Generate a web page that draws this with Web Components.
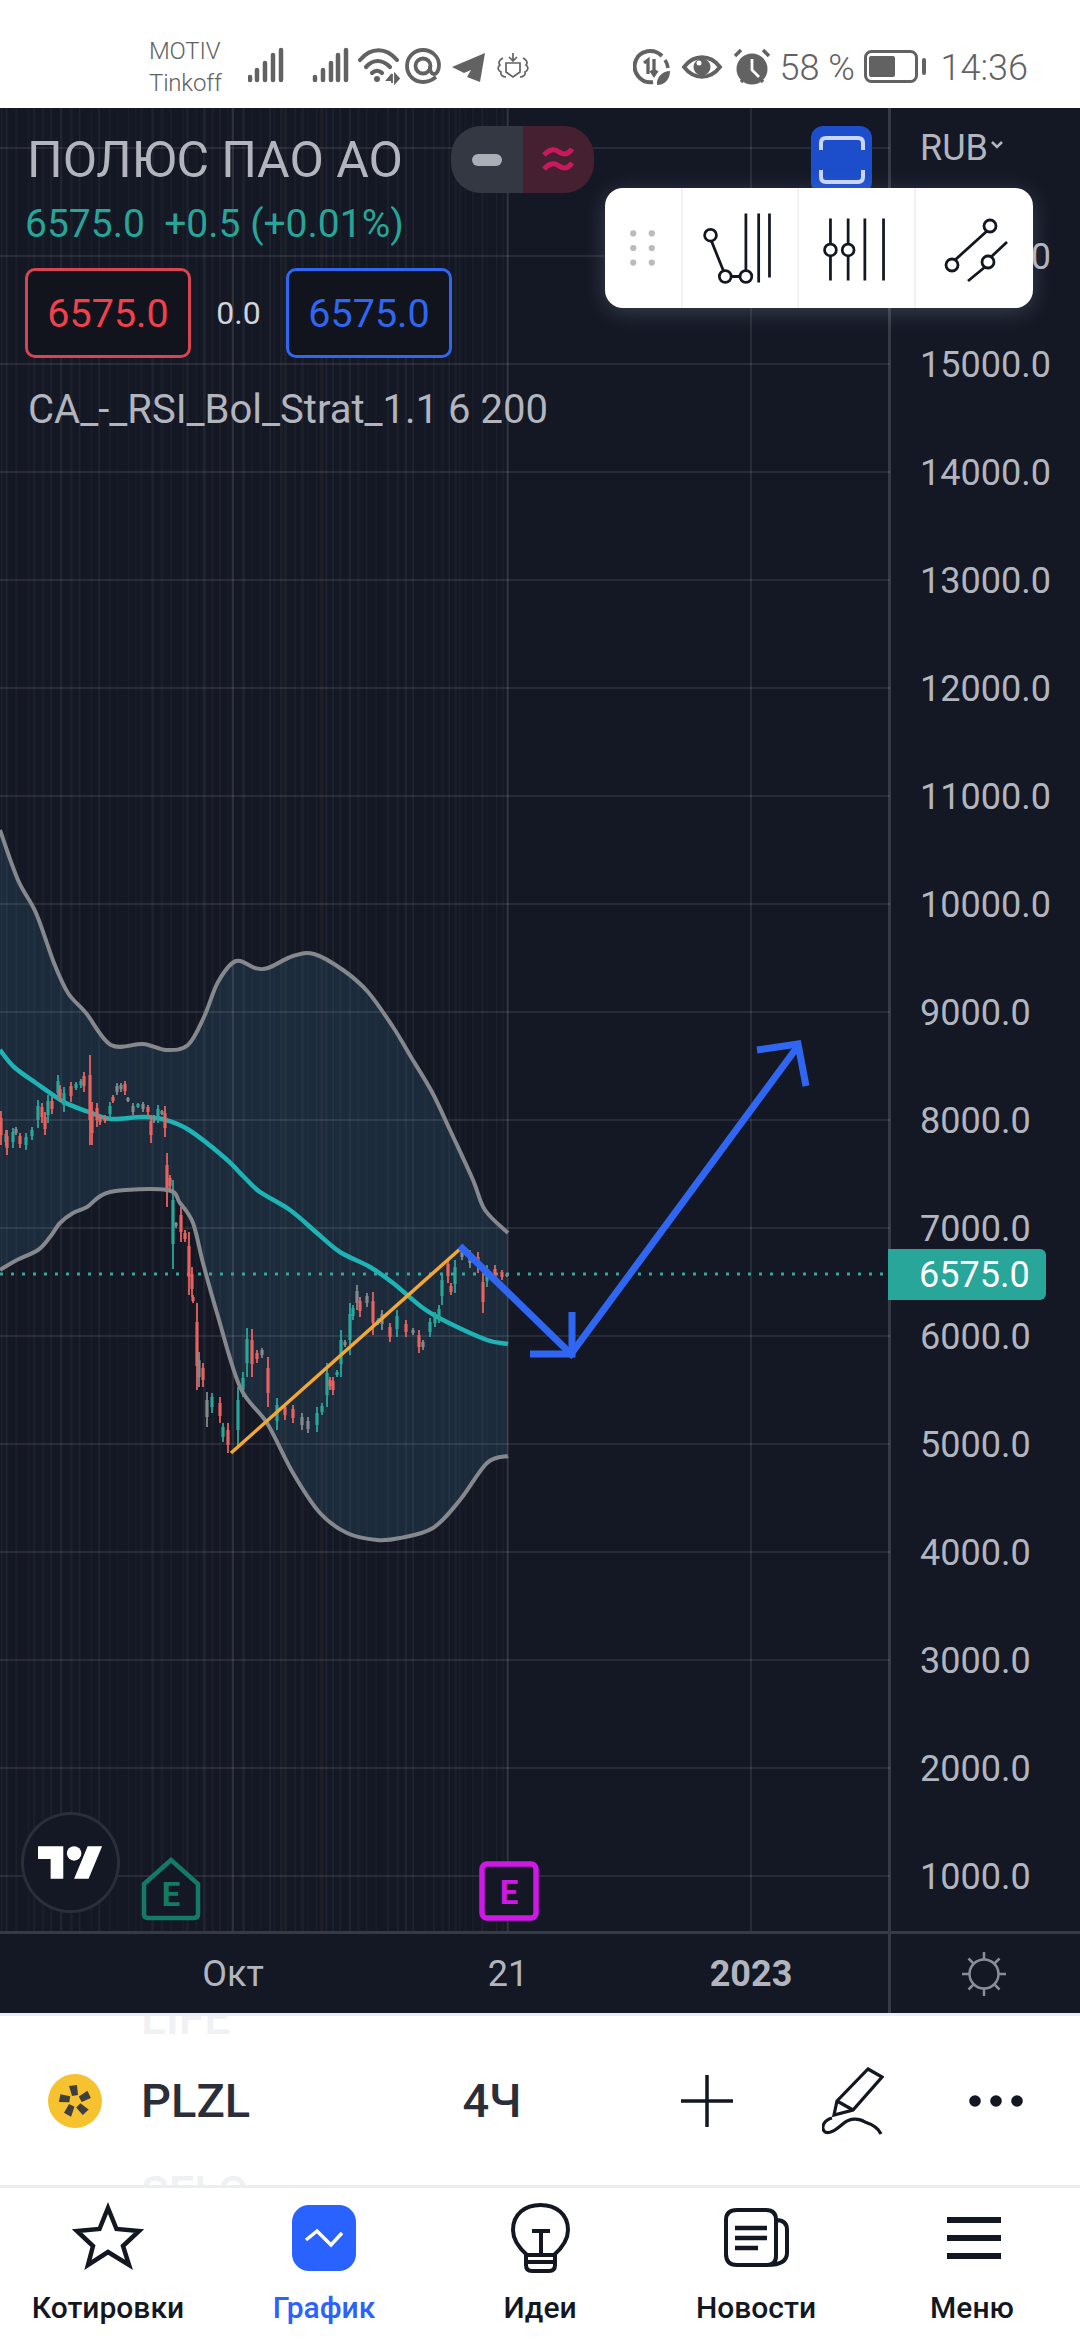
<!DOCTYPE html>
<html lang="ru"><head><meta charset="utf-8"><title>PLZL</title>
<style>
html,body{margin:0;padding:0;background:#fff;}
body{width:1080px;height:2340px;overflow:hidden;font-family:Roboto,"Noto Sans",sans-serif;display:flex;flex-direction:column;}
</style></head><body>
<ts-status></ts-status>
<ts-chart></ts-chart>
<ts-symbol></ts-symbol>
<ts-tabbar>
  <ts-tab label="Котировки"><svg viewBox="68 2198 80 80" width="80" height="80" fill="none" stroke="#131722" stroke-width="4.5" stroke-linejoin="miter"><path d="M108 2208L116.500 2229L139 2231L123 2246L129 2265L108 2252L88 2265L93 2246L77 2231L99.500 2229Z"/></svg></ts-tab>
  <ts-tab label="График" active><svg viewBox="284 2198 80 80" width="80" height="80"><rect x="292" y="2205" width="64" height="66" rx="17" fill="#2962ff"/><path d="M306 2240L317 2231L331 2245L342 2233" fill="none" stroke="#fff" stroke-width="3.500"/></svg></ts-tab>
  <ts-tab label="Идеи"><svg viewBox="500 2198 80 80" width="80" height="80" fill="none" stroke="#131722" stroke-width="4"><path d="M527 2255C518 2247 513 2238 513 2230C513 2214 525 2205 540.500 2205C556 2205 568 2214 568 2230C568 2238 563 2247 554 2255Z"/><path d="M532 2231H550M541 2231V2255M526 2255V2265Q526 2271 532 2271H549Q555 2271 555 2265V2255M526 2262H555"/></svg></ts-tab>
  <ts-tab label="Новости"><svg viewBox="716 2198 80 80" width="80" height="80" fill="none" stroke="#131722" stroke-width="4"><path d="M776 2220V2256Q776 2265 767 2265H737Q726 2265 726 2254V2220Q726 2210 737 2210H766Q776 2210 776 2220Q787 2220 787 2230V2253Q787 2265 767 2265"/><path d="M735 2228H767M735 2238H767M735 2248H758" stroke-width="4.500"/></svg></ts-tab>
  <ts-tab label="Меню"><svg viewBox="932 2198 80 80" width="80" height="80" fill="#131722"><rect x="947" y="2217" width="54" height="6"/><rect x="947" y="2235" width="54" height="6"/><rect x="947" y="2253" width="54" height="6"/></svg></ts-tab>
</ts-tabbar>
<script>
function catmull(p){
  let d='M'+p[0][0]+' '+p[0][1];
  for(let i=0;i<p.length-1;i++){
    const a=p[Math.max(i-1,0)],b=p[i],c=p[i+1],e=p[Math.min(i+2,p.length-1)];
    const f=n=>n.toFixed(1);
    d+='C'+f(b[0]+(c[0]-a[0])/6)+' '+f(b[1]+(c[1]-a[1])/6)+' '+f(c[0]-(e[0]-b[0])/6)+' '+f(c[1]-(e[1]-b[1])/6)+' '+c[0]+' '+c[1];
  }
  return d;
}
const UPPER=[[0,830],[18,880],[36,913],[54,963],[68,993],[86,1013],[111,1045],[143,1044],[166,1050],[188,1045],[204,1017],[218,982],[236,961],[255,968],[268,968],[293,956],[314,954],[343,970],[368,992],[393,1027],[411,1057],[432,1092],[450,1130],[473,1180],[485,1210],[508,1233]];
const LOWER=[[0,1270],[17,1260],[38,1250],[50,1237],[60,1223],[73,1213],[87,1207],[110,1192],[167,1190],[180,1203],[193,1223],[203,1263],[217,1313],[240,1387],[267,1423],[293,1473],[320,1513],[347,1533],[377,1540],[400,1538],[433,1528],[460,1500],[487,1463],[508,1456]];
const MA=[[0,1050],[14,1067],[36,1083],[64,1102],[89,1112],[111,1119],[143,1117],[166,1120],[189,1130],[225,1158],[245,1178],[260,1192],[290,1210],[317,1233],[340,1252],[370,1267],[393,1283],[423,1308],[447,1322],[487,1340],[508,1344]];
const A=[[1,'r',1111,1145],[6,'g',1130,1146],[7,'r',1130,1155],[13,'g',1128,1148],[16,'n',1127,1135],[20,'r',1133,1148],[26,'g',1133,1150],[32,'g',1127,1140],[38,'g',1100,1128],[42,'r',1103,1123],[45,'r',1112,1135],[48,'g',1095,1123],[52,'r',1097,1114],[58,'g',1075,1100],[60,'r',1085,1102],[64,'g',1087,1112],[71,'r',1082,1102],[76,'g',1082,1090],[81,'g',1079,1088],[84,'r',1072,1092],[90,'r',1055,1145],[92,'r',1102,1145],[97,'r',1103,1127],[100,'r',1115,1125],[105,'r',1115,1123],[110,'g',1102,1118],[113,'r',1095,1103],[117,'n',1083,1095],[121,'n',1083,1092],[125,'r',1081,1095],[128,'n',1097,1102],[133,'n',1103,1115],[138,'g',1103,1108],[143,'n',1102,1112],[148,'r',1105,1115],[151,'r',1115,1143],[154,'n',1115,1123],[158,'g',1105,1123],[162,'n',1110,1115],[165,'r',1106,1137],[167,'r',1153,1207],[170,'r',1175,1190],[173,'g',1180,1269],[176,'n',1222,1228],[181,'r',1207,1242],[185,'r',1230,1242],[189,'r',1232,1295],[192,'r',1267,1297],[193,'r',1295,1303],[197,'r',1303,1390],[199,'n',1352,1387],[203,'r',1363,1387],[207,'n',1392,1427],[212,'g',1393,1413],[220,'r',1397,1423],[223,'g',1423,1442],[228,'r',1423,1453],[238,'g',1387,1447],[243,'g',1372,1397],[247,'g',1328,1377],[252,'r',1329,1377],[257,'r',1350,1363],[262,'n',1348,1358],[268,'r',1357,1407],[277,'g',1398,1430],[285,'r',1403,1420],[293,'r',1405,1423],[302,'n',1413,1430],[308,'n',1417,1433],[317,'g',1407,1432],[322,'g',1403,1415],[327,'g',1363,1407],[330,'r',1377,1390],[333,'r',1377,1395],[337,'g',1370,1377],[341,'g',1330,1377],[345,'n',1340,1347],[350,'g',1303,1355],[353,'g',1305,1320],[357,'n',1285,1310],[360,'r',1297,1317],[367,'n',1293,1307],[373,'r',1292,1335],[378,'g',1318,1325],[382,'n',1310,1330],[390,'r',1323,1342],[397,'g',1310,1337],[406,'r',1320,1337],[413,'n',1328,1335],[419,'r',1330,1353],[423,'n',1340,1350],[430,'g',1318,1337],[435,'g',1312,1327],[439,'g',1305,1323],[442,'g',1273,1305],[448,'r',1258,1283],[451,'r',1283,1295],[455,'g',1260,1293],[462,'n',1248,1260],[470,'n',1250,1268],[478,'r',1252,1273],[483,'r',1273,1313],[487,'g',1265,1287],[495,'r',1265,1283],[502,'r',1270,1280],[507,'n',1273,1277]];
const COL={r:'#e8625f',g:'#2aa79b',n:'#85888c'};
function stripes(){
  let s='',x=1,seed=17;
  const rnd=()=>{seed=(seed*1103515245+12345)&0x7fffffff;return seed/0x7fffffff;};
  while(x<508){
    const warm=rnd()<.45;
    const o=(.025+rnd()*.035).toFixed(3);
    const w=(1+rnd()*2).toFixed(1);
    s+='<rect x="'+x.toFixed(1)+'" y="108" width="'+w+'" height="1823" fill="'+(warm?'#c8a080':'#ffffff')+'" opacity="'+o+'"/>';
    x+=4+rnd()*8;
  }
  return s;
}
function plotSvg(){
  const upperRev=LOWER.slice().reverse();
  const bandD=catmull(UPPER)+'L'+upperRev.map(p=>p.join(' ')).join('L')+'Z';
  let grid='';
  for(let y=148;y<=1877;y+=108.03){grid+='<rect x="0" y="'+(Math.round(y)-1)+'" width="890" height="2" fill="#fff" opacity=".085"/>';}
  [233,508,751].forEach(x=>{grid+='<rect x="'+(x-1)+'" y="108" width="2" height="1823" fill="#fff" opacity=".085"/>';});
  let c='';
  A.forEach(a=>{
    const [x,k,t,b]=a;
    c+='<path d="M'+x+' '+t+'V'+b+'" stroke="'+COL[k]+'" stroke-width="1.800"/>';
    const h=(b-t)*.5,m=t+(b-t)*.22;
    c+='<path d="M'+x+' '+m.toFixed(0)+'V'+(m+h).toFixed(0)+'" stroke="'+COL[k]+'" stroke-width="3.200"/>';
  });
  return '<svg viewBox="0 108 890 1823" width="890" height="1823" xmlns="http://www.w3.org/2000/svg" fill="none">'+
  '<path d="'+bandD+'" fill="#1b2b3b" stroke="none"/>'+stripes()+grid+
  '<path d="'+catmull(MA)+'" stroke="#1eb3b4" stroke-width="4.500"/>'+
  '<path d="M0 1274H888" stroke="#34a798" stroke-width="3" stroke-dasharray="3 8"/>'+c+
  '<path d="'+catmull(UPPER)+'" stroke="#85888d" stroke-width="4"/>'+
  '<path d="'+catmull(LOWER)+'" stroke="#85888d" stroke-width="4"/>'+
  '<path d="M231 1453L460 1249" stroke="#f3a832" stroke-width="3.500"/>'+
  '<path d="M460 1246L571 1354L798 1046" stroke="#2f66f2" stroke-width="7" stroke-linejoin="miter"/>'+
  '<path d="M572 1312V1354H530M757 1050L798 1044L806 1086" stroke="#2f66f2" stroke-width="7"/>'+
  '</svg>';
}
const def=(name,html,extra)=>{
  customElements.define(name,class extends HTMLElement{
    constructor(){super();this.attachShadow({mode:'open'}).innerHTML=typeof html==='function'?html(this):html;}
    connectedCallback(){if(extra)extra(this);}
  });
};
def('ts-status',`<style>
:host{display:flex;align-items:center;height:108px;box-sizing:border-box;padding:22px 52px 0 149px;background:#fff;color:#626262;font-family:Roboto,sans-serif;font-weight:300;flex:none}
.c{display:flex;flex-direction:column;width:99px;font-size:24px;line-height:32px;margin-top:4px;letter-spacing:-.2px}
.t{font-size:36px;line-height:40px;margin-top:6px}
.s{flex:1}
svg{display:block;flex:none}
</style>
<div class="c"><span>MOTIV</span><span>Tinkoff</span></div>
<svg width="284" height="50" viewBox="248 40 284 50" fill="none" stroke="#626262">
<g stroke-width="4.500" stroke-linecap="round"><path d="M250 80V77M257 80V70M265 80V63M273 80V55M281 80V50M315 80V77M323 80V70M331 80V63M338 80V55M346 80V50"/></g>
<g stroke-width="4.200" stroke-linecap="round"><path d="M360 60C371 47 386 47 397 60M366 67C373 59 382 59 390 67M372 73C375 70 379 70 382 73"/></g>
<circle cx="377" cy="79" r="3" fill="#626262" stroke="none"/>
<path d="M392 74L387 80H392M392 74V83M395 74L399 78.500L395 83Z" stroke-width="1.800" fill="#626262"/>
<path d="M436 77C431 81 426 82 423 82C414 82 407 75 407 66C407 57 414 50 423 50C432 50 439 57 439 65C439 70 437 74 434 74C431 74 430 71 430 66" stroke-width="3.800"/><circle cx="423" cy="66" r="7.500" stroke-width="3.800"/>
<path d="M485 53L452 67L464 73L471 70L467 77L480 82Z" fill="#626262" stroke="none"/>
<g stroke-width="1.700"><path d="M513 53V60M509 57L513 61L517 57M506 63H520V72L513 77L506 72ZM503 58C499 60 498 63 500 65C497 67 498 71 501 72C500 75 503 77 506 77M523 58C527 60 528 63 526 65C529 67 528 71 525 72C526 75 523 77 520 77"/></g>
</svg><span class="s"></span>
<svg width="138" height="50" viewBox="633 40 138 50" fill="none" stroke="#626262">
<path d="M662 56C654 48 640 50 636 60C631 72 641 84 653 82" stroke-width="4"/><path d="M665 60A17 17 0 0 1 668 68" stroke-width="3.500"/>
<path d="M644 63L648 60V74M654 59V74M651 70.500L654 75L657 70.500" stroke-width="3.300"/>
<path d="M657 85C656 77 663 71 670 71C670 79 665 85 657 85Z" fill="#626262" stroke="none"/>
<path d="M684 67C694 54 710 54 720 67C710 80 694 80 684 67Z" stroke-width="3.800"/><circle cx="702" cy="67" r="8.500" fill="#626262" stroke="none"/><circle cx="699" cy="63" r="2.500" fill="#fff" stroke="none"/>
<circle cx="752" cy="69" r="15.500" fill="#626262" stroke="none"/><path d="M752 59V70L759 77" stroke="#fff" stroke-width="2.800"/>
<path d="M735 56L741 50M769 56L763 50M741 82L744 79M763 82L760 79" stroke-width="3.500"/>
</svg>
<span class="t" style="margin-left:9px;width:84px;white-space:pre">58 %</span>
<svg width="63" height="50" viewBox="864 40 63 50" fill="none"><rect x="865.500" y="51.500" width="51" height="30" rx="6" stroke="#626262" stroke-width="3"/><rect x="869" y="56" width="26" height="21" rx="2" fill="#626262"/><rect x="922" y="58" width="4" height="17" rx="2" fill="#626262"/></svg>
<span class="t" style="margin-left:14px">14:36</span>`);
def('ts-price-scale',`<style>
:host{display:flex;flex-direction:column;padding-left:29px;color:#b2b5be;font-size:36px;font-family:Roboto,sans-serif;height:100%;box-sizing:border-box}
.r{display:flex;align-items:center;height:80px;font-size:36px;margin-bottom:15px;gap:2px}
.p{height:108px;display:flex;align-items:center;flex:none}
svg{display:block}
</style>
<div class="r">RUB<svg width="14" height="10" viewBox="0 0 14 10" fill="none" stroke="#b2b5be" stroke-width="2.500" style="margin-bottom:6px"><path d="M2 2L7 7L12 2"/></svg></div>
`+Array.from({length:16},(_,i)=>'<div class="p">'+(16-i)+'000.0</div>').join(''));
def('ts-time-axis',`<style>
:host{display:grid;grid-template-columns:466px 84px 62px 278px;align-items:center;height:100%;color:#b2b5be;font-size:36px;text-align:center;font-family:Roboto,sans-serif;box-sizing:border-box}
b{grid-column:4}
</style><span>Окт</span><span>21</span><b>2023</b>`);
def('ts-legend',`<style>
:host{display:flex;flex-direction:column;position:absolute;left:0;top:0;padding:18px 0 0 25px;font-family:Roboto,sans-serif;color:#b2b5be;width:600px;box-sizing:border-box}
.title{display:flex;align-items:center;height:67px}
.n{font-size:50px;margin-left:2px;width:424px;white-space:nowrap}
.pill{display:flex;width:143px;height:67px;border-radius:30px;overflow:hidden}
.pill div{flex:1;display:flex;align-items:center;justify-content:center}
.a{background:#343842}.b{background:#452030}
.q{color:#27a598;font-size:39px;line-height:44px;margin-top:9px;white-space:pre}
.boxes{display:flex;align-items:center;margin-top:22px;font-size:39.500px}
.box{width:166px;height:90px;box-sizing:border-box;border:3px solid;border-radius:10px;background:#12141d;display:flex;align-items:center;justify-content:center}
.red{color:#f0414d;border-color:#d64551}.blue{color:#2f66f2;border-color:#2f66f2}
.m{width:95px;text-align:center;font-size:32px;color:#d1d4dc}
.ca{font-size:40px;line-height:44px;margin:30px 0 0 3px;white-space:nowrap}
</style>
<div class="title"><span class="n">ПОЛЮС ПАО АО</span><div class="pill"><div class="a"><svg width="30" height="12"><rect width="30" height="12" rx="6" fill="#abaeb6"/></svg></div><div class="b"><svg width="32" height="28" viewBox="0 0 32 28" fill="none" stroke="#c9195c" stroke-width="5"><path d="M2 9C8 2 14 3 17 6C21 9 26 9 30 3M2 23C8 16 14 17 17 20C21 23 26 23 30 17"/></svg></div></div></div>
<div class="q">6575.0  +0.5 (+0.01%)</div>
<div class="boxes"><div class="box red">6575.0</div><div class="m">0.0</div><div class="box blue">6575.0</div></div>
<div class="ca">CA_-_RSI_Bol_Strat_1.1 6 200</div>`);
def('ts-toolbar',`<style>
:host{display:flex;position:absolute;left:605px;top:80px;width:428px;height:120px;background:#fff;border-radius:18px;box-shadow:0 4px 22px rgba(190,200,235,.22);overflow:hidden}
.c{border-right:2px solid #eff2f8;display:flex;align-items:center;justify-content:center;box-sizing:border-box;height:100%}
.c:last-child{border:0}
svg{display:block}
</style>
<div class="c" style="width:78px"><svg width="78" height="120" viewBox="605 188 78 120" fill="#b9bbc1"><circle cx="634" cy="233" r="3.200"/><circle cx="653" cy="233" r="3.200"/><circle cx="634" cy="248" r="3.200"/><circle cx="653" cy="248" r="3.200"/><circle cx="634" cy="263" r="3.200"/><circle cx="653" cy="263" r="3.200"/></svg></div>
<div class="c" style="width:116px"><svg width="116" height="120" viewBox="683 188 116 120" fill="none" stroke="#131722" stroke-width="2.800"><circle cx="711" cy="235" r="6"/><circle cx="726" cy="277" r="6"/><circle cx="747" cy="277" r="6"/><path d="M712 241L724 271M732 277H741M747 271V213M760 213V283M771 213V278"/></svg></div>
<div class="c" style="width:117px"><svg width="117" height="120" viewBox="799 188 117 120" fill="none" stroke="#131722" stroke-width="2.800"><path d="M831 218V244M831 256V281M849 218V244M849 256V281M866 218V281M885 218V281"/><circle cx="831" cy="250" r="6"/><circle cx="849" cy="250" r="6"/></svg></div>
<div class="c" style="width:117px"><svg width="117" height="120" viewBox="916 188 117 120" fill="none" stroke="#131722" stroke-width="2.800"><circle cx="990" cy="226" r="6"/><circle cx="952" cy="265" r="6"/><circle cx="988" cy="262" r="6"/><path d="M987 231L955 260M1007 242L991 257M985 267L968 281"/></svg></div>`);
def('ts-chart',`<style>
:host{display:grid;grid-template-columns:890px 190px;grid-template-rows:1823px 82px;position:relative;height:1905px;width:1080px;background:#141824;overflow:hidden;flex:none;font-family:Roboto,sans-serif}
.plot{position:relative;overflow:hidden;border-right:0}
.plot svg{display:block}
.scale{border-left:3px solid #363a45;margin-left:-2px}
.axis{border-top:3px solid #363a45}
.corner{border-top:3px solid #363a45;border-left:3px solid #363a45;margin-left:-2px;display:flex;align-items:center;justify-content:center;padding-right:0}
.tag{position:absolute;left:888px;top:1141px;width:158px;height:51px;background:#27a699;border-radius:0 6px 6px 0;color:#fff;font-size:36px;display:flex;align-items:center;padding-left:31px;box-sizing:border-box}
.btn{position:absolute;left:811px;top:18px;width:61px;height:68px;background:#1c4dcb;border-radius:12px;display:flex;align-items:center;justify-content:center}
.logo{position:absolute;left:21px;top:1704px;width:99px;height:101px;box-sizing:border-box;border:3px solid #2a2e39;border-radius:50%;background:#141824;display:flex;align-items:center;justify-content:center}
.flag{position:absolute}
</style>
<div class="plot" id="plot"></div>
<div class="scale"><ts-price-scale></ts-price-scale></div>
<div class="axis"><ts-time-axis></ts-time-axis></div>
<div class="corner"><svg width="50" height="50" viewBox="0 0 50 50" fill="none" stroke="#8a8d96" stroke-width="2.500" style="margin-left:-3px"><circle cx="25" cy="25" r="14.500"/><path d="M25 3V10M25 40V47M3 25H10M40 25H47M9.500 9.500L14.500 14.500M35.500 35.500L40.500 40.500M9.500 40.500L14.500 35.500M35.500 14.500L40.500 9.500"/></svg></div>
<div class="btn"><svg width="46" height="48" viewBox="0 0 46 48" fill="none" stroke="#c9d6f7" stroke-width="4"><path d="M2 14V7Q2 2 7 2H39Q44 2 44 7V14M2 34V41Q2 46 7 46H39Q44 46 44 41V34"/></svg></div>
<div class="logo"><svg width="65" height="33" viewBox="0 4 36 18" fill="#fff"><path d="M14 22H7V11H0V4h14v18zM28 22h-8l7.500-18h8L28 22z"/><circle cx="20" cy="8" r="4"/></svg></div>
<svg class="flag" style="left:141px;top:1749px" width="60" height="64" viewBox="0 0 60 64"><path d="M30 3L57 27V57Q57 61 53 61H7Q3 61 3 57V27Z" fill="#141824" stroke="#137a67" stroke-width="4.500"/><text x="30" y="49" text-anchor="middle" font-family="Roboto,sans-serif" font-weight="700" font-size="33" fill="#137a67">E</text></svg>
<svg class="flag" style="left:479px;top:1753px" width="60" height="60" viewBox="0 0 60 60"><rect x="3" y="3" width="54" height="54" rx="5" fill="#141824" stroke="#cf17e6" stroke-width="5.500"/><text x="30" y="43" text-anchor="middle" font-family="Roboto,sans-serif" font-weight="700" font-size="33" fill="#cf17e6">E</text></svg>
<ts-legend></ts-legend>
<ts-toolbar></ts-toolbar>
<div class="tag">6575.0</div>`,el=>{el.shadowRoot.getElementById('plot').innerHTML=plotSvg();});
def('ts-symbol',`<style>
:host{display:flex;align-items:center;position:relative;height:175px;box-sizing:border-box;background:#fff;border-top:3px solid #e8ecf5;border-bottom:3px solid #eceef3;overflow:hidden;flex:none;font-family:Roboto,sans-serif;color:#2a2e39;padding:0 57px 0 48px}
.ghost{position:absolute;left:141px;font-size:46px;font-weight:500;color:#f0f1f4;line-height:54px}
.n{font-size:47px;font-weight:500;margin-left:39px;width:322px}
.t{font-size:47px;font-weight:500;width:219px}
svg{display:block;flex:none}
</style>
<span class="ghost" style="top:-25px">LIFE</span><span class="ghost" style="top:150px">SFLC</span>
<svg width="54" height="54" viewBox="-27 -27 54 54"><circle r="27" fill="#f7c22f"/><g fill="#3f3f3f"><path d="M-3 -5L-6 -15L2 -16L3 -6Z"/><path d="M-3 -5L-6 -15L2 -16L3 -6Z" transform="rotate(72)"/><path d="M-3 -5L-6 -15L2 -16L3 -6Z" transform="rotate(144)"/><path d="M-3 -5L-6 -15L2 -16L3 -6Z" transform="rotate(216)"/><path d="M-3 -5L-6 -15L2 -16L3 -6Z" transform="rotate(288)"/></g></svg>
<span class="n">PLZL</span><span class="t">4Ч</span>
<svg width="52" height="54" viewBox="682 2073 52 54" fill="none" stroke="#131722" stroke-width="3.500"><path d="M708 2074V2126M682 2100H734"/></svg>
<svg style="margin-left:89px" width="62" height="68" viewBox="823 2065 62 68" fill="none" stroke="#131722" stroke-width="3.200"><path d="M869 2067L883 2075L854 2108L835 2113L838 2099ZM838 2099L854 2108"/><path d="M833 2116C825 2118 822 2125 825 2129C829 2134 838 2127 845 2121C851 2116 860 2116 866 2120C872 2122 879 2125 882 2132"/></svg>
<svg style="margin-left:85px" width="54" height="12" viewBox="0 0 54 12" fill="#131722"><circle cx="6" cy="6" r="5.800"/><circle cx="27" cy="6" r="5.800"/><circle cx="48" cy="6" r="5.800"/></svg>`);
def('ts-tabbar',`<style>:host{display:grid;grid-template-columns:repeat(5,216px);background:#fff;flex:1;min-height:0}</style><slot></slot>`);
def('ts-tab',el=>{
  const on=el.hasAttribute('active');
  return `<style>
:host{display:flex;flex-direction:column;align-items:center;padding-top:10px;box-sizing:border-box;font-family:Roboto,sans-serif}
.l{margin-top:10px;font-size:30px;line-height:40px;font-weight:500;color:${on?'#2962ff':'#131722'};white-space:nowrap}
</style><slot></slot><div class="l">${el.getAttribute('label')}</div>`;
});
</script>
</body></html>
